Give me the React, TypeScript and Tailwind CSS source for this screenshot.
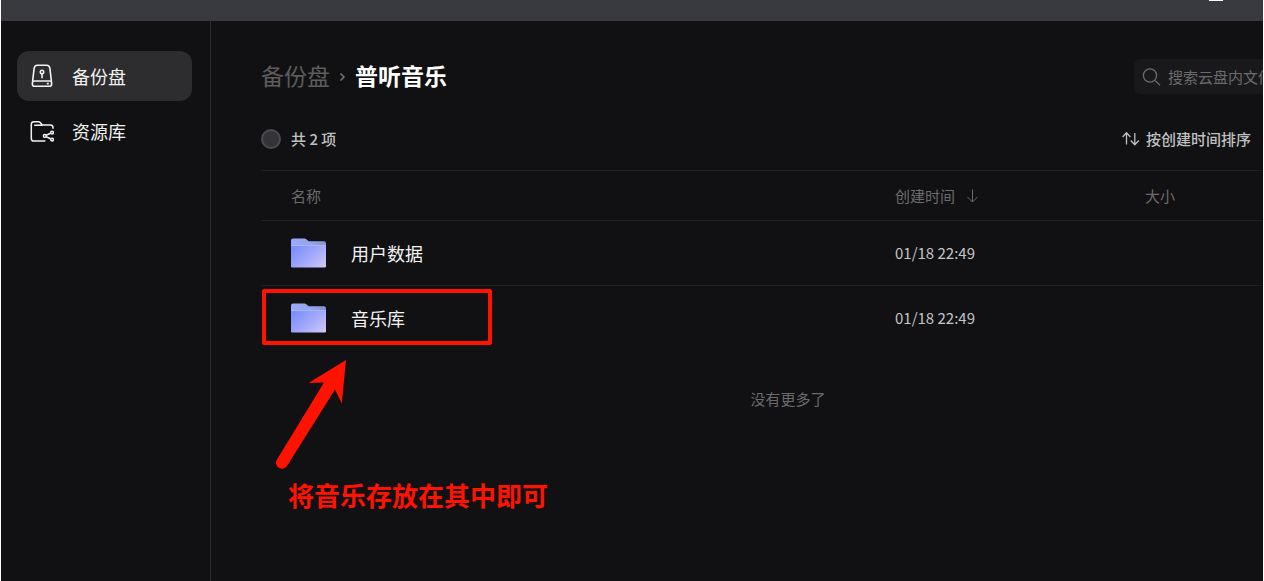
import React from "react";

type Item = { name: string; created: string };

const items: Item[] = [
  { name: "用户数据", created: "01/18 22:49" },
  { name: "音乐库", created: "01/18 22:49" },
];

function DriveIcon() {
  return (
    <svg className="size-6" viewBox="0 0 24 24" fill="none" stroke="currentColor" strokeWidth="1.6" aria-hidden="true">
      <path d="M2.6 17.2 4.1 4.4Q4.5 1.3 7.4 1.3h9.2q2.9 0 3.3 3.1l1.5 12.8" />
      <rect x="2.4" y="17" width="19.2" height="5.3" rx="2" />
      <circle cx="12" cy="8" r="1.7" />
      <path d="M12 9.8v4.4M16.8 19.6h2" />
    </svg>
  );
}

function SharedFolderIcon() {
  return (
    <svg className="size-6" viewBox="0 0 24 24" fill="none" stroke="currentColor" strokeWidth="1.5" aria-hidden="true">
      <path d="M15.4 22.1H3.8Q1.3 22.1 1.3 19.4V5.4Q1.3 2.7 3.9 2.7h4.3q1.2 0 2 .9l2.1 2.5h8.1q2.6 0 2.6 2.6v1M4.2 6.2h8.4" />
      <circle cx="22" cy="13.6" r="1.4" />
      <circle cx="14.8" cy="17" r="1.4" />
      <circle cx="22" cy="20.6" r="1.4" />
      <path d="m16.2 16.3 4.4-2M16.2 17.8l4.4 2" />
    </svg>
  );
}

function FolderIcon({ id }: { id: string }) {
  return (
    <svg className="h-[30px] w-[35px] shrink-0" viewBox="0 0 35 30" aria-hidden="true">
      <defs>
        <linearGradient id={id} x1="0" y1="0.2" x2="1" y2="0.9">
          <stop offset="0" stopColor="#7c8fff" />
          <stop offset="0.5" stopColor="#a0a8fa" />
          <stop offset="1" stopColor="#cdc8f3" />
        </linearGradient>
        <linearGradient id={id + "-back"} x1="0" y1="0" x2="1" y2="0">
          <stop offset="0" stopColor="#9aa9fa" />
          <stop offset="0.6" stopColor="#95a5ee" />
          <stop offset="1" stopColor="#8295c8" />
        </linearGradient>
      </defs>
      <path d="M0 2.5Q0 .5 2 .5h11.5q1 0 1.8.7l1.8 1.5q.8.6 1.8.6H33q2 0 2 2V12H0Z" fill={"url(#" + id + "-back)"} />
      <path d="M0 7.5h35v20.7q0 1.3-1.3 1.3H1.3Q0 29.5 0 28.2Z" fill={"url(#" + id + ")"} />
      <path d="M0 7.5h35" stroke="#aab6fc" strokeWidth="1" />
    </svg>
  );
}

function NavItem({ label, active, children }: { label: string; active?: boolean; children: React.ReactNode }) {
  return (
    <a
      href="#"
      className={
        active
          ? "flex h-[50px] items-center gap-[18px] rounded-xl bg-[#2d2d2f] px-[13px]"
          : "flex h-[50px] items-center gap-[18px] rounded-xl px-[13px]"
      }
    >
      {children}
      <span>{label}</span>
    </a>
  );
}

export default function App() {
  return (
    <div className="relative flex min-h-screen flex-col overflow-hidden border-x border-white bg-[#111113] font-['Noto_Sans_CJK_SC',sans-serif] text-[15px] leading-6 text-[#f2f2f2]">
      <header className="flex h-[21px] justify-end bg-[#393a3f] pr-10">
        <button aria-label="最小化" className="h-px w-[14px] bg-white" />
      </header>

      <div className="flex grow">
        <nav className="flex w-[210px] shrink-0 flex-col gap-[5px] border-r border-[#29292b] pt-[30px] pr-[18px] pl-4 text-lg">
          <NavItem label="备份盘" active>
            <DriveIcon />
          </NavItem>
          <NavItem label="资源库">
            <SharedFolderIcon />
          </NavItem>
        </nav>

        <main className="min-w-0 grow overflow-hidden pl-[50px]">
          <div className="-mr-[52px] pt-[38px]">
            <div className="flex h-[35px] items-center justify-between">
              <div className="flex items-center gap-[9px] pb-[3px] text-[23px]">
                <a href="#" className="text-[#5c5c5d]">备份盘</a>
                <svg className="h-2 w-[7px] translate-y-0.5" viewBox="0 0 7 8" fill="none" stroke="#77777a" strokeWidth="1.5" aria-hidden="true">
                  <path d="m1.5.5 3.5 3.5-3.5 3.5" />
                </svg>
                <h1 className="font-bold text-white">普听音乐</h1>
              </div>
              <label className="flex h-[35px] w-[181px] items-center gap-[6px] rounded-md bg-[#19191b] pl-2">
                <svg className="size-5 shrink-0" viewBox="0 0 20 20" fill="none" stroke="#6b6b6d" strokeWidth="1.3" aria-hidden="true">
                  <circle cx="8" cy="8.5" r="6.6" />
                  <path d="m13.2 13.7 4.8 4.6" />
                </svg>
                <input
                  type="text"
                  aria-label="搜索"
                  placeholder="搜索云盘内文件"
                  className="w-full min-w-0 bg-transparent outline-none placeholder:text-[#6b6b6d]"
                />
              </label>
            </div>

            <div className="flex h-[77px] items-center justify-between border-b border-[#222224] pt-[14px] pr-16 text-[#c0c0c1]">
              <label className="flex items-center gap-[10px] font-medium">
                <input
                  type="checkbox"
                  className="size-5 appearance-none rounded-full border-2 border-[#4b4b50] bg-[#343438]"
                />
                共 2 项
              </label>
              <button className="flex items-center gap-[6px] font-medium">
                <svg className="h-4 w-[18px]" viewBox="0 0 18 16" fill="none" stroke="currentColor" strokeWidth="1.3" aria-hidden="true">
                  <path d="M4.5 13.5V2M.6 6l3.9-4.2L8.4 6M12.8 2v11.5M8.8 9.5l4 4.2 4-4.2" />
                </svg>
                按创建时间排序
              </button>
            </div>

            <table className="w-full table-fixed border-separate border-spacing-0 text-left">
              <thead className="text-[#6b6b6d]">
                <tr className="h-[50px]">
                  <th className="border-b border-[#222224] pl-[30px] font-normal">名称</th>
                  <th className="w-[250px] border-b border-[#222224] font-normal">
                    <button className="flex items-center gap-3">
                      创建时间
                      <svg className="h-[14px] w-[11px]" viewBox="0 0 11 14" fill="none" stroke="currentColor" strokeWidth="1" aria-hidden="true">
                        <path d="M5.5.5v12.5M.5 8l5 5 5-5" />
                      </svg>
                    </button>
                  </th>
                  <th className="w-[170px] border-b border-[#222224] font-normal">大小</th>
                </tr>
              </thead>
              <tbody className="[&_td]:border-b [&_td]:border-[#222224] [&>tr:last-child>td]:border-transparent">
                {items.map((item, i) => (
                  <tr key={item.name} className="h-[65px]">
                    <td className="pl-[30px]">
                      <a href="#" className="flex items-center gap-[25px] text-lg">
                        <FolderIcon id={"folder-" + i} />
                        {item.name}
                      </a>
                    </td>
                    <td className="text-[#c4c4c5]">{item.created}</td>
                    <td />
                  </tr>
                ))}
              </tbody>
            </table>

            <p className="pt-9 text-center text-[#6b6b6d]">没有更多了</p>
          </div>
        </main>
      </div>

      <div className="pointer-events-none absolute top-[289px] left-[261px] h-14 w-[230px] rounded-xs border-4 border-[#ff1200]" />
      <svg className="pointer-events-none absolute top-[355px] left-[268px] h-[120px] w-20" viewBox="0 0 80 120" fill="#ff1200" aria-hidden="true">
        <path d="M77 5 72.8 48.5 66 34.5 18 111a6 6 0 0 1-10.6-5.5L55 27.5l-15.5.4Z" />
      </svg>
      <p className="absolute top-[479px] left-[287px] text-[26px] leading-8 font-bold whitespace-nowrap text-[#ff1200]">
        将音乐存放在其中即可
      </p>
    </div>
  );
}
